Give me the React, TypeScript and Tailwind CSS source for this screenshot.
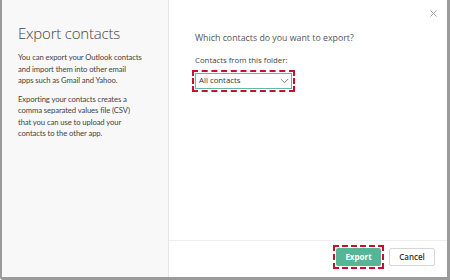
import React from 'react';

const font = { fontFamily: '"Open Sans", "Noto Sans", sans-serif' };
const narrow = { fontFamily: 'Lato, "Open Sans", sans-serif' };

const ChevronDown: React.FC = () => (
  <svg width="9" height="6" viewBox="0 0 9 6" fill="none" className="shrink-0">
    <path d="M0.8 1 L4.5 4.7 L8.2 1" stroke="#777" strokeWidth="0.9" />
  </svg>
);

const CloseIcon: React.FC = () => (
  <svg width="7" height="7" viewBox="0 0 7 7" fill="none">
    <path d="M0.5 0.5 L6.5 6.5 M6.5 0.5 L0.5 6.5" stroke="#999" strokeWidth="0.9" />
  </svg>
);

const App: React.FC = () => {
  return (
    <div className="w-[450px] h-[280px] bg-white overflow-hidden" style={font}>
      <div className="flex h-full border-l-2 border-r-[3px] border-b-[3px] border-[#9b9b9b] rounded-bl-[3px]">
        {/* left info panel */}
        <div className="w-[167px] shrink-0 bg-[#f8f8f8] border-r border-[#e6e6e6] pl-[16px] pr-[10px] pt-[24px]">
          <h1 className="text-[15px] font-light text-[#444] leading-[18px] tracking-[-0.2px]">Export contacts</h1>
          <p className="mt-[10px] text-[7.7px] leading-[11.6px] text-[#444] whitespace-nowrap tracking-[-0.1px]" style={narrow}>
            You can export your Outlook contacts<br />
            and import them into other email<br />
            apps such as Gmail and Yahoo.
          </p>
          <p className="mt-[7px] text-[7.7px] leading-[11.4px] text-[#444] whitespace-nowrap tracking-[-0.1px]" style={narrow}>
            Exporting your contacts creates a<br />
            comma separated values file (CSV)<br />
            that you can use to upload your<br />
            contacts to the other app.
          </p>
        </div>

        {/* right panel */}
        <div className="flex-1 flex flex-col">
          <div className="flex-1 relative pl-[26px] pt-[31px]">
            <button className="absolute right-[8px] top-[8px] p-0.5">
              <CloseIcon />
            </button>
            <h2 className="text-[8.8px] leading-[14px] text-[#555]">Which contacts do you want to export?</h2>
            <div className="mt-[10px] text-[7.8px] leading-[11px] text-[#444]">Contacts from this folder:</div>
            <div className="mt-[4px] -ml-[3px] w-[103px] border-2 border-dashed border-[#c8102e] p-[1px]">
              <div className="flex items-center justify-between h-[16px] border border-[#62b8a4] pl-[3px] pr-[2px]">
                <span className="text-[7.8px] text-[#333]">All contacts</span>
                <ChevronDown />
              </div>
            </div>
          </div>
          <div className="h-[37px] shrink-0 border-t border-[#eeeeee] flex items-start justify-end gap-[5px] pt-[4px] pr-[12px]">
            <div className="border-2 border-dashed border-[#c8102e] p-[1px]">
              <button className="block w-[45px] h-[18px] bg-[#56b596] rounded-[2px] text-white text-[8px] font-bold">Export</button>
            </div>
            <button className="mt-[3px] w-[46px] h-[18px] bg-white border border-[#d6d6d6] rounded-[2px] text-[#333] text-[8px] font-semibold">
              Cancel
            </button>
          </div>
        </div>
      </div>
    </div>
  );
};

export default App;
